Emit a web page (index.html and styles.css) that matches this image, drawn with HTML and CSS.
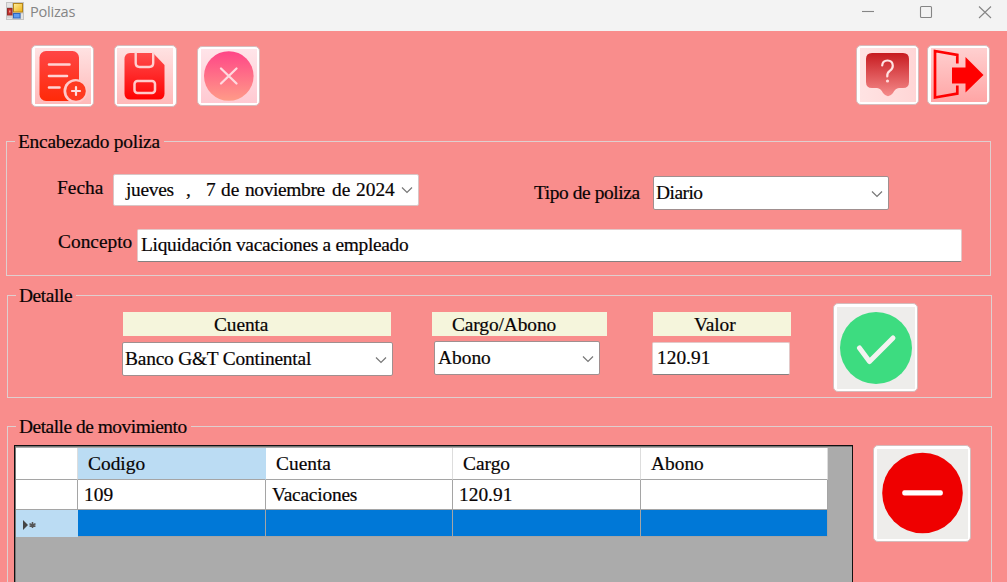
FILE: index.html
```html
<!DOCTYPE html>
<html lang="es">
<head>
<meta charset="utf-8">
<title>Polizas</title>
<link rel="stylesheet" href="styles.css">
</head>
<body>
<header class="titlebar">
  <svg class="app-icon" width="18" height="18" viewBox="0 0 18 18">
    <rect x=".5" y=".5" width="17" height="17" fill="#e4e4e4" stroke="#c4c4c4"/>
    <path d="M6.5 1v16M1 5.500h6M1 15h6M14.500 10v7M7 11h10" stroke="#c2c2c2" fill="none"/>
    <rect x="7.500" y="1.500" width="9" height="8.500" fill="url(#gold)" stroke="#b5851a"/>
    <rect x="1.500" y="6.500" width="4.500" height="6.500" fill="#c3302c" stroke="#912d29"/>
    <rect x="3" y="8.500" width="1.500" height="2" fill="#ef9a90"/>
    <rect x="7.500" y="11.500" width="6.500" height="4.500" fill="#5f9cf0" stroke="#2e68c0"/>
    <defs><linearGradient id="gold" x1="0" y1="0" x2="1" y2="1"><stop stop-color="#fff0a0"/><stop offset="1" stop-color="#eeb012"/></linearGradient></defs>
  </svg>
  <span class="title">Polizas</span>
  <svg class="window-controls" width="132" height="14" viewBox="0 0 132 14" fill="none" stroke="#858585" stroke-width="1.100">
    <path d="M1 6.500h12"/><rect x="59.500" y="1.500" width="11" height="11" rx="1"/><path d="M118 1.500l12 11.500M130 1.500l-12 11.500"/>
  </svg>
</header>
<main class="form">
  <nav class="toolbar">
    <button class="tool tool-new" aria-label="Nuevo">
      <svg width="56" height="56" viewBox="0 0 56 56">
        <defs><linearGradient id="red" x1="0" y1="0" x2="0" y2="1"><stop stop-color="#ff4545"/><stop offset="1" stop-color="#ff2a08"/></linearGradient></defs>
        <rect x="4.500" y="3" width="39.500" height="50" rx="6.500" fill="url(#red)"/>
        <path d="M14 16.500h20.500M14 28h18M14 39.500h10.500" stroke="#ffd3d3" stroke-width="2.600" stroke-linecap="round"/>
        <circle cx="40.500" cy="43" r="12" fill="#ffc9c9"/><circle cx="41" cy="43" r="9.800" fill="#ff3a20"/>
        <path d="M41 39v8M37 43h8" stroke="#ffdede" stroke-width="2.200" stroke-linecap="round"/>
      </svg>
    </button>
    <button class="tool tool-save" aria-label="Guardar">
      <svg width="56" height="56" viewBox="0 0 56 56">
        <defs><linearGradient id="save" x1="0" y1="0" x2="0" y2="1"><stop stop-color="#ff4b4b"/><stop offset="1" stop-color="#ff0202"/></linearGradient></defs>
        <path d="M13 5H36l11.500 12v28.500q0 6-6 6h-28q-6 0-6-6v-34q0-6.500 5.500-6.500z" fill="url(#save)"/>
        <path d="M18.700 4.500v10.500q0 4 4 4h9.500q4 0 4-4V4.500" fill="none" stroke="#ffd0d0" stroke-width="2.400"/>
        <rect x="17.500" y="33" width="20.500" height="12" rx="3" fill="none" stroke="#ffcaca" stroke-width="2.500"/>
      </svg>
    </button>
    <button class="tool tool-cancel" aria-label="Cancelar">
      <svg width="56" height="54" viewBox="0 0 56 54">
        <defs><linearGradient id="pink" x1="0" y1="0" x2="0" y2="1"><stop stop-color="#ff4587"/><stop offset="1" stop-color="#ff9b88"/></linearGradient></defs>
        <circle cx="27.800" cy="27" r="24.800" fill="url(#pink)"/>
        <path d="M20 19.500l15.500 15M35.500 19.500l-15.500 15" stroke="#ffd9df" stroke-width="2.300" stroke-linecap="round"/>
      </svg>
    </button>
    <button class="tool tool-help" aria-label="Ayuda">
      <svg width="56" height="54" viewBox="0 0 56 54">
        <defs><linearGradient id="help" x1="0" y1="0" x2="0" y2="1"><stop stop-color="#c71b20"/><stop offset="1" stop-color="#f58b8b"/></linearGradient></defs>
        <path d="M12 5h31q6 0 6 6V34q0 6-6 6h-4q-4 .5-6 5-5 6.500-10 0-2-4.500-6-5h-5q-6 0-6-6V11q0-6 6-6z" fill="url(#help)"/>
        <path d="M22.200 17.500q.3-5 5.300-5t5.300 5.200q0 3.100-3 5.100t-2.500 5.700" fill="none" stroke="#ffe3e3" stroke-width="2.200" stroke-linecap="round"/>
        <circle cx="27.500" cy="33" r="1.600" fill="#ffdada"/>
      </svg>
    </button>
    <button class="tool tool-exit" aria-label="Salir">
      <svg width="56" height="54" viewBox="0 0 56 54">
        <path d="M26.300 15.500V6.800L4 3v46.500l22.300-4V37.500" fill="none" stroke="#f00" stroke-width="2.700"/>
        <path d="M21 19.500h13.500V9l18 18-18 17.500V35.500H21z" fill="#f00"/>
      </svg>
    </button>
  </nav>

  <fieldset class="group group-header">
    <legend class="w-header">Encabezado poliza</legend>
    <div class="row row-first">
      <label class="label-date">Fecha</label>
      <div class="datepicker">
        <span class="day">jueves</span><span class="comma">,</span><span class="num">7</span><span class="de">de</span><span class="month">noviembre</span><span class="de2">de</span><span class="year">2024</span>
        <svg class="chevron" width="12" height="8" viewBox="0 0 12 8"><path d="M1 1.500l5 5 5-5"/></svg>
      </div>
      <label class="label-type">Tipo de poliza</label>
      <div class="select select-type"><span>Diario</span><svg class="chevron" width="12" height="8" viewBox="0 0 12 8"><path d="M1 1.500l5 5 5-5"/></svg></div>
    </div>
    <div class="row row-concept">
      <label class="label-concept">Concepto</label>
      <div class="textbox textbox-concept"><span>Liquidación vacaciones a empleado</span></div>
    </div>
  </fieldset>

  <fieldset class="group group-detail">
    <legend class="w-detail">Detalle</legend>
    <div class="detail-row">
      <div class="field field-account">
        <div class="caption"><span>Cuenta</span></div>
        <div class="select"><span>Banco G&amp;T Continental</span><svg class="chevron" width="12" height="8" viewBox="0 0 12 8"><path d="M1 1.500l5 5 5-5"/></svg></div>
      </div>
      <div class="field field-kind">
        <div class="caption"><span>Cargo/Abono</span></div>
        <div class="select"><span>Abono</span><svg class="chevron" width="12" height="8" viewBox="0 0 12 8"><path d="M1 1.500l5 5 5-5"/></svg></div>
      </div>
      <div class="field field-value">
        <div class="caption"><span>Valor</span></div>
        <div class="textbox"><span>120.91</span></div>
      </div>
      <button class="tool big-ok" aria-label="Aceptar">
        <svg width="78" height="82" viewBox="0 0 78 82"><circle cx="39" cy="41" r="36" fill="#3ddc80"/><path d="M22.500 41l10 13.500L56 31" fill="none" stroke="#f3f3f1" stroke-width="5" stroke-linecap="round" stroke-linejoin="round"/></svg>
      </button>
    </div>
  </fieldset>

  <fieldset class="group group-moves">
    <legend class="w-moves">Detalle de movimiento</legend>
    <div class="moves-row">
      <div class="datagrid">
        <div class="cells">
          <div class="cell head"></div><div class="cell head active c-code">Codigo</div><div class="cell head">Cuenta</div><div class="cell head">Cargo</div><div class="cell head">Abono</div>
          <div class="cell"></div><div class="cell">109</div><div class="cell c-vac">Vacaciones</div><div class="cell">120.91</div><div class="cell"></div>
          <div class="cell marker"><svg width="16" height="12" viewBox="0 0 16 12"><path d="M1 1l5 5-5 5z" fill="#444"/><path d="M10.500 3v6M7.500 4.800l6 2.600M7.500 7.400l6-2.600" stroke="#555" stroke-width="1.500"/></svg></div><div class="cell selected"></div><div class="cell selected"></div><div class="cell selected"></div><div class="cell selected"></div>
        </div>
      </div>
      <button class="tool big-remove" aria-label="Quitar">
        <svg width="91" height="90" viewBox="0 0 91 90"><circle cx="45.500" cy="44" r="40.300" fill="#ef0000"/><rect x="25.300" y="41.200" width="40.500" height="5.200" rx="2" fill="#fff"/></svg>
      </button>
    </div>
  </fieldset>
</main>
</body>
</html>
```
FILE: styles.css
```css
* { box-sizing: border-box; }
html, body { height: 582px; overflow: hidden; }
body { margin: 0; background: #f98d8c; color: #080404; font: 19.4px/22px "Liberation Serif", "Times New Roman", serif; }

.titlebar { display: flex; height: 31px; background: #f3f3f3; }
.app-icon { margin: 2px 0 0 6px; }
.title { margin: 0 0 0 6px; font: 14.6px/22px "Open Sans", "Noto Sans", sans-serif; color: #858585; letter-spacing: -0.25px; }
.window-controls { margin: 5px 14px 0 auto; }

.form { height: 551px; overflow: hidden; -webkit-text-stroke: 0.2px; }
.toolbar { display: flex; align-items: flex-start; height: 99px; padding: 14px 17px 0 31px; }
.tool { flex: none; width: 63px; height: 62px; padding: 0; border: 1px solid #d5bcbc; border-radius: 5px; background: #fff; display: flex; align-items: center; justify-content: center; }
.tool svg { display: block; }
.toolbar .tool svg { background: linear-gradient(#ffe2e2, #ffb9b9); }
.toolbar .tool-save { margin-left: 19.5px; }
.toolbar .tool-cancel { margin: 1px 0 0 20.5px; height: 60px; }
.toolbar .tool-cancel svg { background: linear-gradient(#ffe4e9, #ffc9d2); }
.toolbar .tool-help { margin-left: auto; height: 60px; }
.toolbar .tool-help svg { background: linear-gradient(90deg, #ffe3e3, #ffd6d6); }
.toolbar .tool-exit { margin-left: 8px; height: 60px; }
.toolbar .tool-exit svg { background: linear-gradient(#ffd0d0, #ffa5a5); }

.group { margin: 0; padding: 0; border: 1px solid #dfcfcf; min-width: 0; }
.group legend { height: 23px; line-height: 24px; padding: 0 3px; margin-left: 8px; white-space: nowrap; }
.group-header { width: 985px; height: 146px; margin-left: 6px; }
.group-detail { width: 985px; height: 114px; margin: 8px 0 0 7px; }
.group-moves { width: 985px; height: 200px; margin: 17px 0 0 7px; }
.w-header { width: 149px; letter-spacing: -0.24px; }
.w-detail { width: 60px; letter-spacing: -0.4px; }
.w-moves { width: 175px; letter-spacing: -0.48px; }

.row { display: flex; align-items: flex-start; white-space: nowrap; }
.row-first { padding: 21px 0 0 50px; height: 76px; }
.label-date { width: 56px; margin-top: 3px; }
.datepicker { display: flex; align-items: center; width: 306px; height: 32px; padding: 0 5px 1px 12px; background: #fff; border: 1px solid #d8c5c5; border-radius: 2px; }
.day { width: 60px; letter-spacing: -0.3px; }
.comma { width: 20px; }
.num { width: 15px; }
.de { width: 24px; }
.month { width: 87px; letter-spacing: -0.35px; }
.de2 { width: 24px; }
.chevron { flex: none; margin-left: auto; fill: none; stroke: #777; stroke-width: 1.200; }
.label-type { width: 119px; margin: 8px 0 0 115px; letter-spacing: -0.4px; }
.select { display: flex; align-items: center; height: 34px; padding: 0 5px 1px 2px; background: #fff; border: 1px solid #a08f8f; border-radius: 2px; white-space: nowrap; }
.select .chevron { margin-top: 2px; }
.select-type { width: 236px; margin-top: 2px; letter-spacing: -0.5px; }
.row-concept { padding-left: 51px; }
.label-concept { width: 79px; margin-top: 2px; }
.textbox { display: flex; align-items: center; height: 33px; padding: 0 3px 1px; background: #fff; border: 1px solid #e3c9c9; border-bottom-color: #858080; border-radius: 2px; }
.textbox-concept { width: 825px; letter-spacing: -0.3px; }

.detail-row { display: flex; align-items: flex-start; padding-left: 114px; }
.field { flex: none; padding-top: 5px; }
.caption { height: 24px; background: #f5f5dc; margin-bottom: 6px; line-height: 26px; letter-spacing: -0.1px; }
.field-account { width: 271px; }
.field-account .caption { width: 268px; margin-left: 1px; padding-left: 91px; }
.field-account .select { letter-spacing: -0.2px; }
.field-kind { width: 175px; margin-left: 39px; }
.field-kind .caption { padding-left: 20px; margin-bottom: 5px; }
.field-kind .select { width: 166px; margin-left: 2px; padding-left: 3px; }
.field-value { width: 139px; margin-left: 45px; }
.field-value .caption { width: 138px; margin-left: 1px; padding-left: 41px; }
.field-value .textbox { width: 138px; padding-left: 4px; }
.big-ok { width: 85px; height: 89px; margin: -4px 0 0 42px; }
.big-ok svg, .big-remove svg { background: #eeedeb; }

.moves-row { display: flex; align-items: flex-start; padding: 7px 0 0 6px; }
.datagrid { width: 839px; height: 180px; border: 1px solid #111; box-shadow: inset 1px 1px #777; background: #ababab; padding: 2px 0 0 1px; }
.cells { display: grid; width: 812px; grid-template-columns: 62px 188px 187px 188px 187px; grid-template-rows: 32px 30px 27px; background: #fff; }
.cell { border-right: 1px solid #a5a5a5; border-bottom: 1px solid #a5a5a5; padding: 4px 0 0 6px; }
.cell.head { padding: 5px 0 0 10px; border-right-color: #ddd; }
.cell.active, .cell.marker { background: #bbdcf3; }
.cell.active { border-right-color: #bbdcf3; }
.cell.marker { padding: 4px 0 0 6px; border-color: #bbdcf3; }
.cell.selected { background: #0078d7; }
.c-vac { letter-spacing: -0.2px; }
.big-remove { width: 98px; height: 97px; margin-left: 20px; }
```
